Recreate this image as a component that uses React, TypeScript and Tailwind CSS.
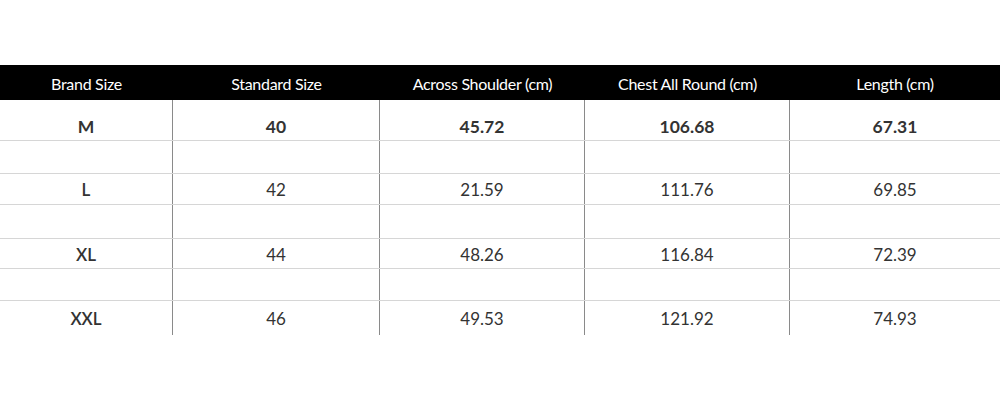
import React from 'react';

const columns = [
  { label: 'Brand Size', width: 'w-[173px]' },
  { label: 'Standard Size', width: 'w-[207px]' },
  { label: 'Across Shoulder (cm)', width: 'w-[205px]' },
  { label: 'Chest All Round (cm)', width: 'w-[205px]' },
  { label: 'Length (cm)', width: 'flex-1' },
];

const rows: { cells: string[]; height: string; cell: string; bold?: boolean }[] = [
  { cells: ['M', '40', '45.72', '106.68', '67.31'], height: 'h-[40px] text-[17.5px]', cell: 'pt-[14px]', bold: true },
  { cells: ['', '', '', '', ''], height: 'h-[33px]', cell: '' },
  { cells: ['L', '42', '21.59', '111.76', '69.85'], height: 'h-[31px] text-[17px]', cell: 'pt-[2px]' },
  { cells: ['', '', '', '', ''], height: 'h-[34px]', cell: '' },
  { cells: ['XL', '44', '48.26', '116.84', '72.39'], height: 'h-[30px] text-[17px]', cell: 'pt-[2px]' },
  { cells: ['', '', '', '', ''], height: 'h-[32px]', cell: '' },
  { cells: ['XXL', '46', '49.53', '121.92', '74.93'], height: 'h-[35px] text-[17px]', cell: 'pt-[1px]' },
];

const App: React.FC = () => {
  return (
    <div className="w-[1000px] h-[400px] bg-white pt-[65px] font-['Lato','Liberation_Sans',sans-serif]">
      <div className="flex h-[35px] bg-black text-white text-[16px] tracking-[-0.3px]">
        {columns.map((col) => (
          <div key={col.label} className={`${col.width} flex items-center justify-center pt-[2px]`}>
            {col.label}
          </div>
        ))}
      </div>

      {rows.map((row, ri) => (
        <div
          key={ri}
          className={`flex ${row.height} ${ri > 0 ? 'border-t border-[#d6d6d6]' : ''} text-[#333] ${row.bold ? 'font-bold' : ''}`}
        >
          {row.cells.map((cell, ci) => (
            <div
              key={ci}
              className={`${columns[ci].width} ${row.cell} flex items-center justify-center ${ci < 4 ? 'border-r border-[#8a8a8a]' : ''} ${ci === 0 && !row.bold ? 'font-semibold' : ''}`}
            >
              {cell}
            </div>
          ))}
        </div>
      ))}
    </div>
  );
};

export default App;
